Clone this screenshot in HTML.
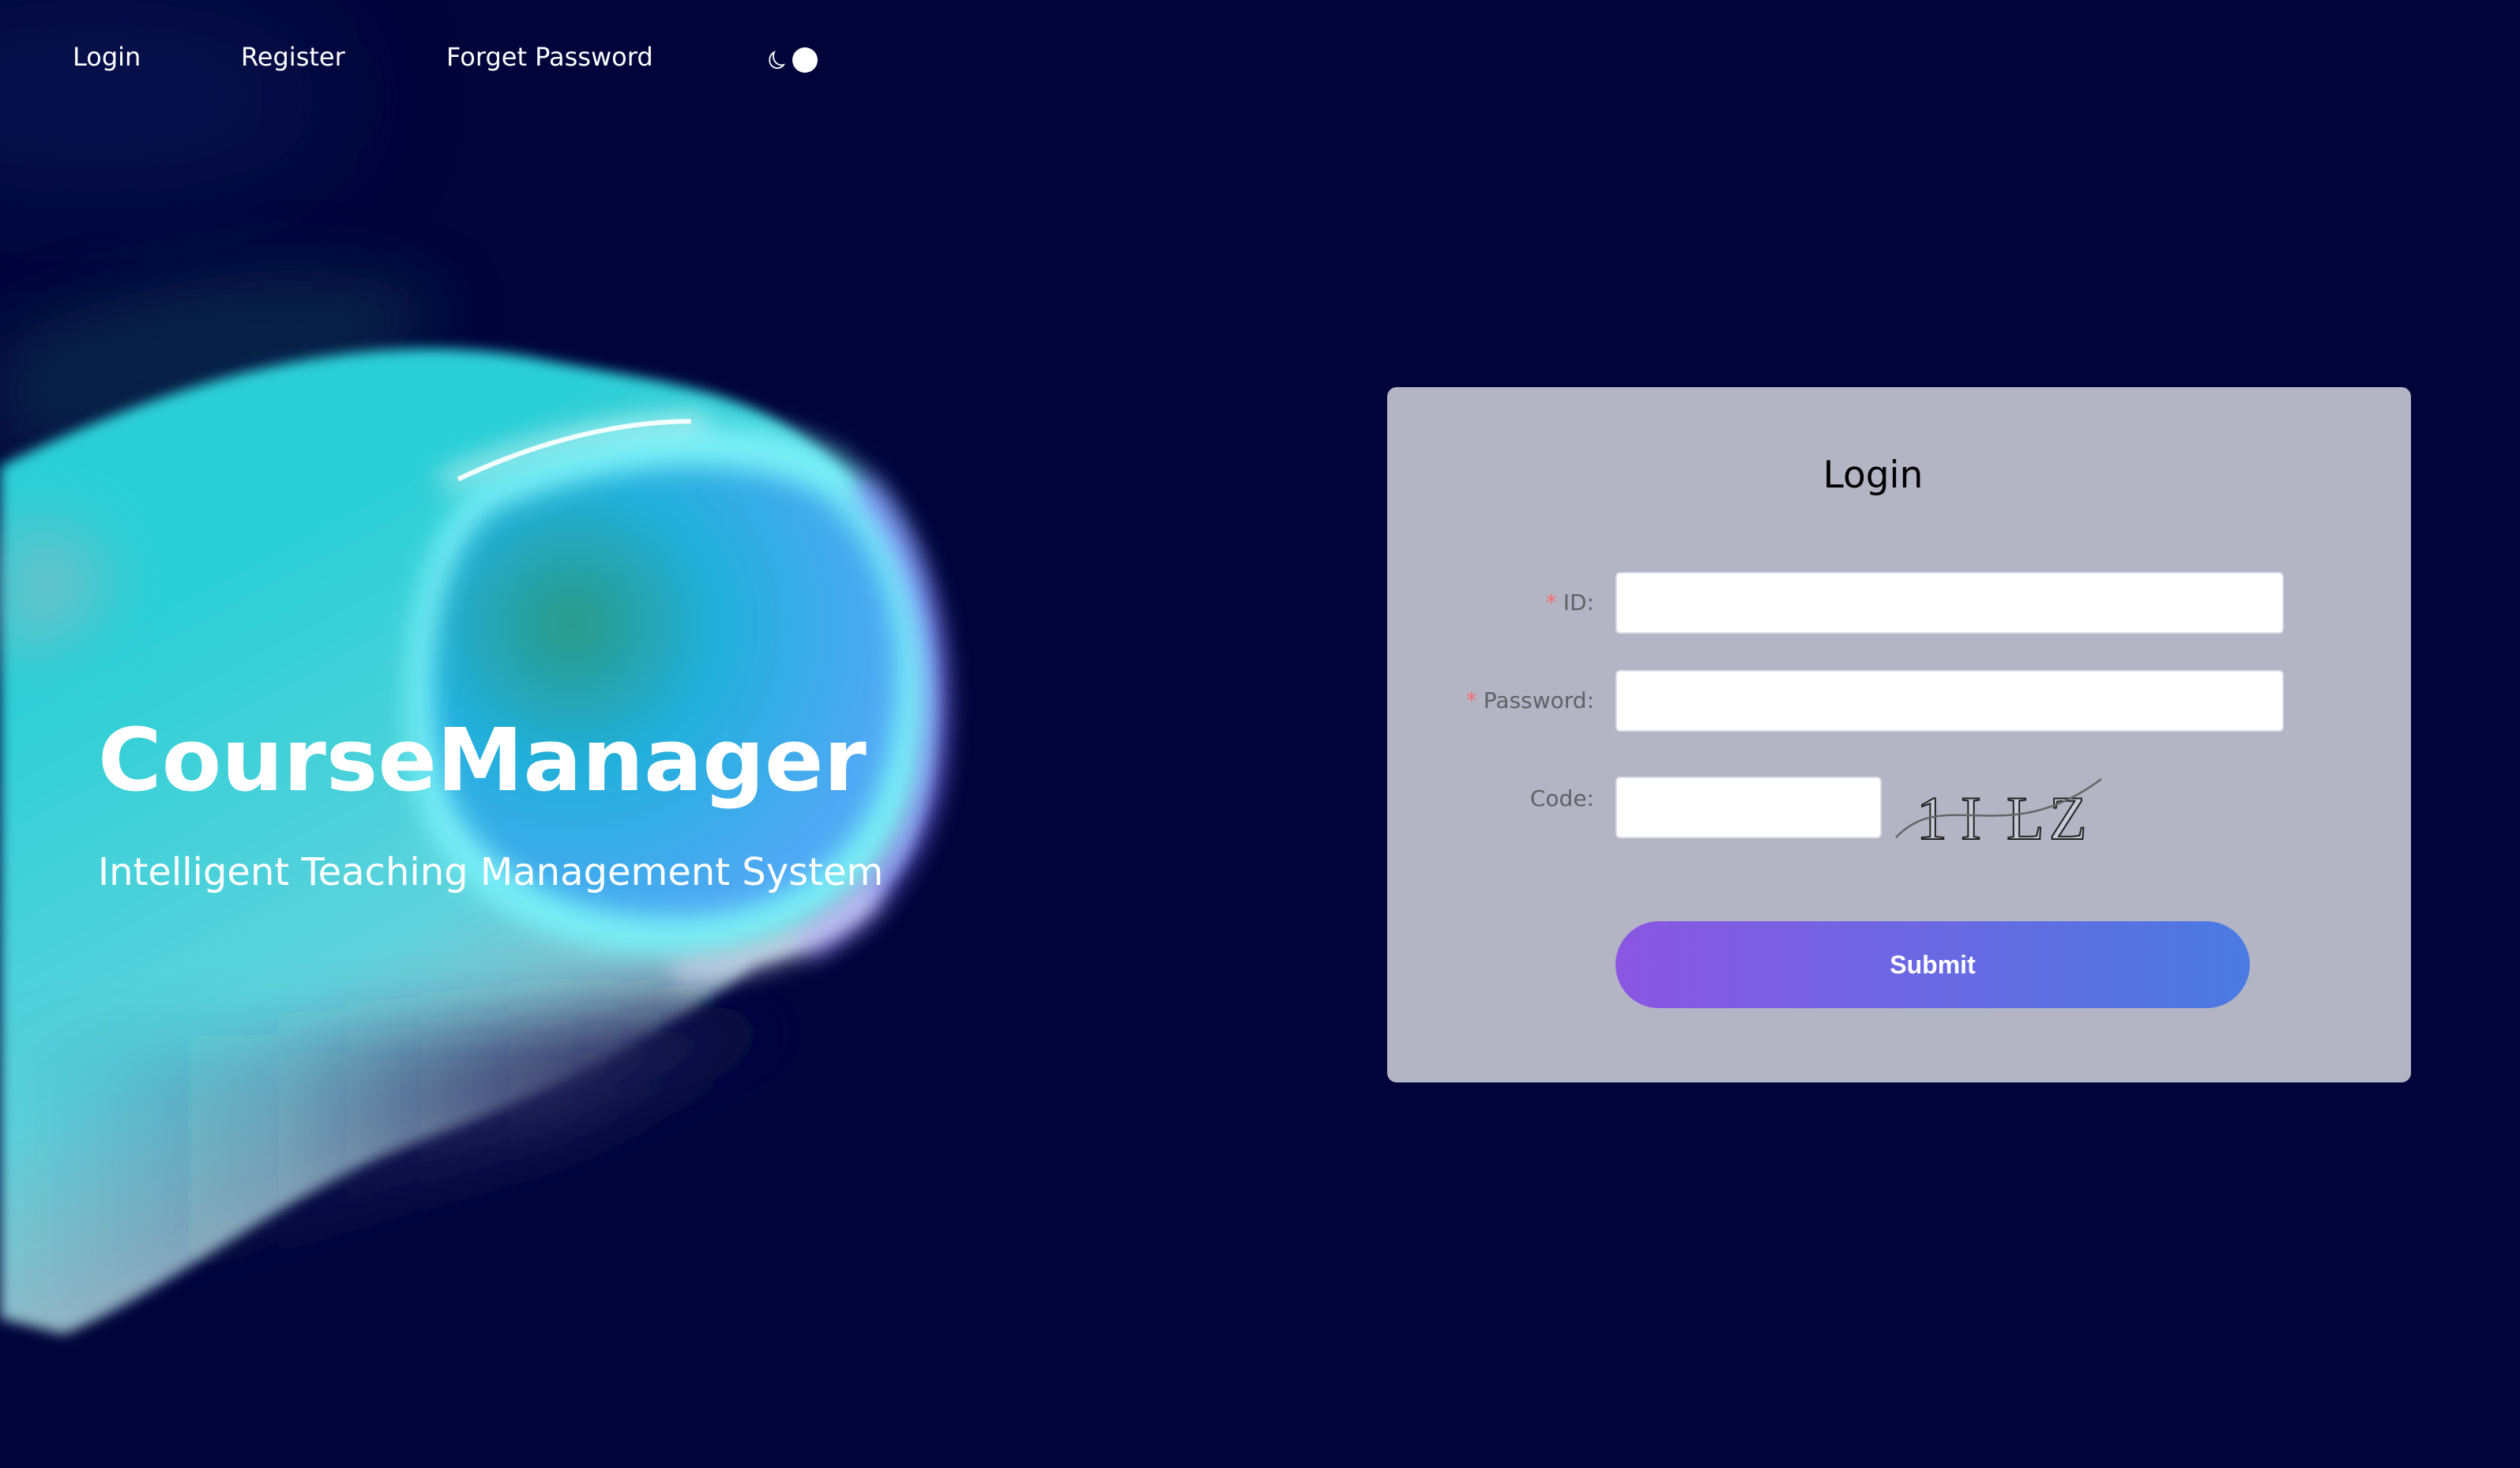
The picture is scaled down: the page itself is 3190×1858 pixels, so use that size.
<!DOCTYPE html>
<html><head><meta charset="utf-8"><style>
*{margin:0;padding:0;box-sizing:border-box}
html,body{width:3190px;height:1858px;overflow:hidden;background:#00043a;font-family:"DejaVu Sans","Liberation Sans",sans-serif}
.abs{position:absolute}
.nav{color:#fff;font-size:32px;top:50px;line-height:44px}
.card{left:1756px;top:490px;width:1296px;height:880px;background:#b3b5c5;border-radius:12px}
.lbl{color:#606266;font-size:28px;text-align:right;width:400px;line-height:78px}
.lbl b{color:#f56c6c;font-weight:normal;margin-right:8px}
.inp{background:#fff;border:2px solid #dcdfe6;border-radius:6px;height:78px}
</style></head><body>
<svg class="abs" style="left:0;top:0" width="3190" height="1858" viewBox="0 0 1568 913">
<defs>
<filter id="b4" x="-50%" y="-50%" width="200%" height="200%"><feGaussianBlur stdDeviation="4"/></filter>
<filter id="b8" x="-50%" y="-50%" width="200%" height="200%"><feGaussianBlur stdDeviation="8"/></filter>
<filter id="b20" x="-50%" y="-50%" width="200%" height="200%"><feGaussianBlur stdDeviation="20"/></filter>
<filter id="b40" x="-50%" y="-50%" width="200%" height="200%"><feGaussianBlur stdDeviation="40"/></filter>
<linearGradient id="g1" x1="0.3" y1="0.2" x2="0.7" y2="1">
<stop offset="0" stop-color="#2ccfd6"/><stop offset="0.45" stop-color="#5cd2dc"/><stop offset="0.72" stop-color="#a0b4c4"/><stop offset="1" stop-color="#a8acc0"/></linearGradient>
<linearGradient id="g3" x1="0" y1="0" x2="1" y2="0">
<stop offset="0" stop-color="#00043a" stop-opacity="0"/><stop offset="0.35" stop-color="#30306a" stop-opacity="0.2"/><stop offset="0.7" stop-color="#2a2a60" stop-opacity="0.85"/><stop offset="1" stop-color="#00043a"/></linearGradient>
<radialGradient id="g2" cx="0.3" cy="0.35" r="0.7"><stop offset="0" stop-color="#2a9a86"/><stop offset="0.45" stop-color="#22b0dc"/><stop offset="1" stop-color="#50a8f4"/></radialGradient>
</defs>
<ellipse cx="60" cy="60" rx="150" ry="60" fill="#0a2060" filter="url(#b40)" opacity="0.5"/>
<path d="M0 210 C100 170 200 150 280 190 L220 240 C120 260 40 280 0 290Z" fill="#0a3450" filter="url(#b20)" opacity="0.6"/>
<path d="M0 290 C120 230 230 205 330 222 C420 240 470 240 520 290 C570 340 590 400 580 480 C570 550 530 585 470 600 C420 640 340 680 260 710 C180 740 110 800 40 830 L0 820Z" fill="url(#g1)" filter="url(#b4)"/>
<path d="M0 640 C150 650 300 640 430 625 C470 630 490 635 500 640 C420 680 330 710 240 740 C170 770 110 810 40 828 L0 820Z" fill="url(#g3)" filter="url(#b20)"/>
<path d="M0 330 C40 320 80 340 60 380 C40 400 10 410 0 410Z" fill="#8fb8c0" filter="url(#b20)" opacity="0.6"/>
<path d="M300 300 C380 260 480 250 530 290 C575 330 585 400 575 470 C565 530 520 580 440 592 C360 600 290 570 265 510 C245 450 250 340 300 300Z" fill="#7af0f6" filter="url(#b8)"/>
<path d="M305 318 C380 285 470 280 515 310 C555 345 565 400 555 460 C545 520 505 565 430 570 C360 574 300 545 278 492 C262 440 265 352 305 318Z" fill="url(#g2)" filter="url(#b8)"/>
<path d="M535 300 C580 350 590 420 578 490 C565 545 530 575 500 590" stroke="#8a7cff" stroke-width="12" fill="none" filter="url(#b8)" opacity="0.9"/>
<path d="M275 300 C330 275 390 262 440 262" stroke="#ffffff" stroke-width="6" fill="none" filter="url(#b8)"/>
<path d="M285 298 C340 272 390 262 430 262" stroke="#ffffff" stroke-width="3" fill="none" opacity="0.9"/>
<path d="M420 605 C470 602 520 585 545 555" stroke="#f0e8ff" stroke-width="8" fill="none" filter="url(#b8)"/>
</svg>
<div class="abs nav" style="left:92px">Login</div>
<div class="abs nav" style="left:305px">Register</div>
<div class="abs nav" style="left:565px">Forget Password</div>
<svg class="abs" style="left:970px;top:58px" width="70" height="36" viewBox="0 0 70 36">
<path d="M10 8 C2 12 2 26 12 28 C16 29 20 27 22 24 C14 26 6 18 10 8Z" fill="none" stroke="#fff" stroke-width="1.8"/>
<circle cx="49" cy="18" r="16" fill="#fff"/>
</svg>
<div class="abs" style="left:124px;top:892px;color:#fff;font-weight:bold;font-size:110px;line-height:140px;white-space:nowrap">CourseManager</div>
<div class="abs" style="left:124px;top:1074px;color:#fff;font-size:48px;line-height:60px;white-space:nowrap">Intelligent Teaching Management System</div>
<div class="abs card"></div>
<div class="abs" style="left:1756px;width:1230px;top:572px;text-align:center;font-size:47px;color:#000;line-height:60px">Login</div>
<div class="abs lbl" style="left:1618px;top:724px"><b>*</b>ID:</div>
<div class="abs inp" style="left:2045px;top:724px;width:846px"></div>
<div class="abs lbl" style="left:1618px;top:848px"><b>*</b>Password:</div>
<div class="abs inp" style="left:2045px;top:848px;width:846px"></div>
<div class="abs lbl" style="left:1618px;top:972px">Code:</div>
<div class="abs inp" style="left:2045px;top:983px;width:337px"></div>
<svg class="abs" style="left:2398px;top:980px" width="270" height="90" viewBox="0 0 270 90">
<g font-family="Liberation Serif,serif" font-size="78" fill="#c8ccd8" stroke="#222" stroke-width="2">
<text x="28" y="82">1</text><text x="84" y="82">I</text><text x="142" y="82">L</text><text x="196" y="82">Z</text></g>
<path d="M2 80 C40 40 80 55 140 52 C190 50 230 30 262 6" stroke="#666" stroke-width="2.5" fill="none"/>
</svg>
<div class="abs" style="left:2045px;top:1166px;width:803px;height:110px;border-radius:55px;background:linear-gradient(90deg,#8a56e2,#4a7ae2);color:#fff;font-family:'Liberation Sans',sans-serif;font-weight:bold;font-size:32px;line-height:110px;text-align:center">Submit</div>
</body></html>
